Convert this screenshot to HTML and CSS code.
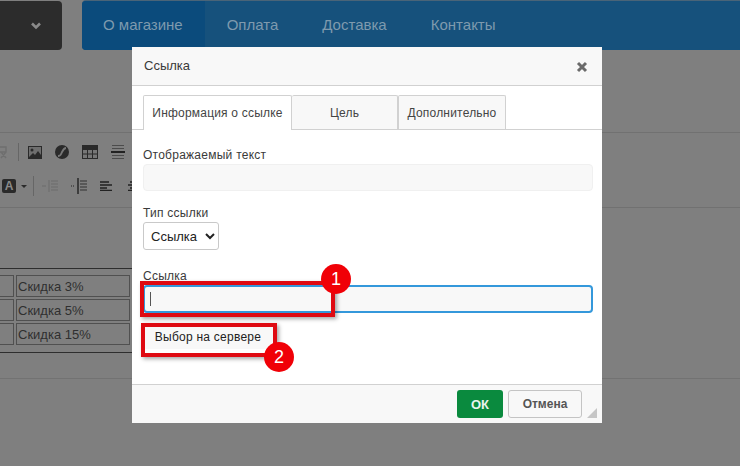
FILE: index.html
```html
<!DOCTYPE html>
<html lang="ru">
<head>
<meta charset="utf-8">
<title>Ссылка</title>
<link rel="stylesheet" href="styles.css">
</head>
<body>
<div class="page">
  <header class="topbar">
    <div class="catalog">
      <svg class="chev" width="12" height="8" viewBox="0 0 12 8"><path d="M2 1.5l4 4 4-4" fill="none" stroke="#8a8a8a" stroke-width="2.6"/></svg>
    </div>
    <nav class="nav">
      <a class="nav-item active">О магазине</a>
      <a class="nav-item">Оплата</a>
      <a class="nav-item">Доставка</a>
      <a class="nav-item">Контакты</a>
    </nav>
  </header>

  <section class="toolbar">
    <div class="tool-row row-one">
      <svg class="faded" width="10" height="14" viewBox="4 0 10 14"><path d="M1 2h9v5H1zM5 7l5 6M10 7l-5 6" fill="none" stroke="#6a6a6a" stroke-width="1.4"/></svg>
      <span class="sep"></span>
      <svg class="tool" width="14" height="13" viewBox="0 0 14 13"><path d="M0 0h14v13H0z" fill="#2a2a2a"/><path d="M1 1h12v11H1z" fill="#6f6f6f"/><path d="M1 11l4-4 2 2 3-4 3 4v3H1z" fill="#2a2a2a"/><circle cx="4" cy="4" r="1.5" fill="#2a2a2a"/></svg>
      <svg class="tool" width="14" height="14" viewBox="0 0 14 14"><circle cx="7" cy="7" r="7" fill="#2a2a2a"/><path d="M3 11c3 0 3-2 4-4s2-4 4-4" fill="none" stroke="#777" stroke-width="1.8"/></svg>
      <svg class="tool" width="16" height="14" viewBox="0 0 16 14"><path d="M0 0h16v14H0z" fill="#2a2a2a"/><path d="M1 5h4v3.500H1zM6 5h4v3.500H6zM11 5h4v3.500h-4zM1 9.500h4V13H1zM6 9.500h4V13H6zM11 9.500h4V13h-4z" fill="#777"/></svg>
      <svg width="14" height="15" viewBox="0 0 14 15"><path d="M1 .5h12M1 3.500h12M1 10.500h12M1 13.500h12" stroke="#4c4c4c"/><path d="M0 7h14" stroke="#222" stroke-width="2"/></svg>
    </div>
    <div class="tool-row row-two">
      <span class="letter">A</span>
      <span class="caret"></span>
      <span class="sep tall"></span>
      <svg class="faded" width="16" height="12" viewBox="0 0 16 12"><path d="M7 0v12M9 1h7M9 4h7M9 7h7M9 10h7M0 6h4" stroke="#666" fill="none"/></svg>
      <svg width="16" height="16" viewBox="0 0 16 16"><path d="M7 0v16" stroke="#222" stroke-width="1.400"/><path d="M9 3h7M9 6h7M9 9h7M9 12h7" stroke="#333" fill="none"/><path d="M0 8h4" stroke="#222" stroke-dasharray="1 1"/></svg>
      <svg width="12" height="10" viewBox="0 0 12 10"><path d="M0 1h9M0 4h12M0 7h7M0 9.500h12" stroke="#222" stroke-width="1.600"/></svg>
      <svg width="12" height="10" viewBox="0 0 12 10"><path d="M2 1h8M0 4h12M2 7h8M0 9.500h12" stroke="#222" stroke-width="1.600"/></svg>
    </div>
  </section>

  <section class="content">
    <div class="table-wrap">
      <table class="discounts">
        <tr><td class="hidden-col"></td><td>Скидка 3%</td></tr>
        <tr><td class="hidden-col"></td><td>Скидка 5%</td></tr>
        <tr><td class="hidden-col"></td><td>Скидка 15%</td></tr>
      </table>
    </div>
  </section>

  <div class="dialog">
    <div class="dialog-head">
      <span class="dialog-title">Ссылка</span>
      <svg class="close" width="12" height="12" viewBox="0 0 12 12"><path d="M2 2l8 8M10 2l-8 8" stroke="#6b6b6b" stroke-width="3"/></svg>
    </div>
    <div class="tabs">
      <span class="tab current">Информация о ссылке</span>
      <span class="tab mid">Цель</span>
      <span class="tab last">Дополнительно</span>
    </div>
    <div class="dialog-body">
      <label class="label">Отображаемый текст</label>
      <div class="field"></div>
      <label class="label second">Тип ссылки</label>
      <select class="type"><option>Ссылка</option></select>
      <label class="label third">Ссылка</label>
      <div class="field focus"><span class="cursor"></span></div>
      <button class="browse">Выбор на сервере</button>
    </div>
    <div class="dialog-foot">
      <button class="ok">ОК</button>
      <button class="cancel">Отмена</button>
      <span class="resize"></span>
    </div>
  </div>

  <div class="mark mark-one"></div>
  <div class="badge badge-one">1</div>
  <div class="mark mark-two"></div>
  <div class="badge badge-two">2</div>
</div>
</body>
</html>
```

FILE: styles.css
```css
* { box-sizing: border-box; }
html, body { margin: 0; padding: 0; }
body { font-family: "Liberation Sans", Arial, sans-serif; background: #7f7f7f; }
.page { position: relative; width: 740px; height: 466px; overflow: hidden; background: #7f7f7f; }

.topbar { display: flex; gap: 20px; padding-top: 1px; height: 50px; }
.catalog { width: 62px; background: #2c2c2c; border-radius: 0 4px 4px 0; display: flex; align-items: center; justify-content: flex-end; padding-right: 20px; }
.nav { flex: 1; display: flex; background: #16517c; border-radius: 4px 0 0 4px; box-shadow: 0 -1px 0 #4a6478; }
.nav-item { padding: 0 22px; line-height: 48px; font-size: 15px; color: #7e9aae; }
.nav-item.active { background: #0b4b7c; padding: 0 22px 0 21px; border-radius: 4px 0 0 4px; }

.toolbar { margin-top: 82px; height: 76px; border-top: 1px solid #717171; border-bottom: 1px solid #717171; position: relative; }
.tool-row { display: flex; align-items: center; }
.row-one { height: 38px; }
.row-two { height: 30px; padding-left: 2px; }
.faded { opacity: .75; }
.sep { width: 1px; height: 18px; background: #666; margin: 0 9px 0 8px; }
.sep.tall { height: 20px; margin: 0 8px 0 6px; }
.tool { margin-right: 13px; }
.tool:first-of-type { margin-right: 14px; }
.letter { width: 14px; height: 14px; background: #2a2a2a; border-radius: 2px; color: #8a8a8a; font-size: 12px; font-weight: 700; line-height: 14px; text-align: center; }
.caret { margin-left: 5px; border-left: 3px solid transparent; border-right: 3px solid transparent; border-top: 3px solid #2a2a2a; }
.row-two svg { margin-right: 13px; }
.row-two svg:nth-of-type(3) { margin-right: 16px; }

.content { margin-top: 60px; height: 111px; border-bottom: 1px solid #727272; }
.table-wrap { width: 132px; height: 85px; border-top: 1px solid #2e2e2e; border-bottom: 1px solid #2e2e2e; display: flex; justify-content: flex-end; overflow: hidden; }
.discounts { flex: none; border-collapse: separate; border-spacing: 2px; margin-top: 4px; align-self: flex-start; }
.discounts td { border: 1px solid #505050; width: 114px; height: 22px; padding: 2px 1px 0; font-size: 13px; color: #2f2f2f; line-height: 18px; }
.discounts .hidden-col { width: 60px; }

.dialog { position: absolute; left: 132px; top: 47px; width: 470px; height: 376px; background: #fff; display: flex; flex-direction: column; color: #333; }
.dialog-head { height: 39px; flex: none; background: #f8f8f8; border-bottom: 1px solid #d1d1d1; display: flex; align-items: center; justify-content: space-between; padding: 0 14px 0 12px; }
.dialog-title { font-size: 13px; color: #3a3a3a; margin-bottom: 2px; }
.close { margin-top: 1px; }
.tabs { flex: none; height: 44px; padding: 9px 0 0 11px; display: flex; border-bottom: 1px solid #d1d1d1; align-items: stretch; }
.tab { border: 1px solid #d1d1d1; border-bottom: 0; background: #f8f8f8; font-size: 12px; color: #444; letter-spacing: .2px; display: flex; align-items: center; justify-content: center; border-radius: 2px 2px 0 0; }
.tab.current { width: 149px; background: #fff; height: 35px; position: relative; }
.tab.mid { width: 106px; border-left: 0; }
.tab.last { width: 108px; }

.dialog-body { flex: 1; padding: 18px 9px 0 11px; display: flex; flex-direction: column; align-items: flex-start; }
.label { font-size: 12px; line-height: 14px; color: #3a3a3a; letter-spacing: .25px; height: 14px; }
.label.second { margin-top: 15px; }
.label.third { margin-top: 19px; }
.field { width: 450px; height: 27px; margin-top: 2px; background: #f8f8f8; border: 1px solid #f0f0f0; border-radius: 4px; flex: none; }
.field.focus { height: 28px; margin-top: 2px; border: 2px solid #3498db; padding: 5px 0 0 5px; }
.cursor { display: block; width: 1px; height: 14px; background: #555; }
.type { width: 76px; height: 28px; margin-top: 2px; background: #fff; border: 1px solid #c9c9c9; border-radius: 3px; font-family: inherit; font-size: 13px; color: #222; padding-left: 3px; flex: none; }
.browse { margin-top: 11px; width: 130px; height: 25px; border: 0; background: #f8f8f8; font-family: inherit; font-size: 12px; letter-spacing: .25px; color: #222; padding: 0; }

.dialog-foot { height: 39px; flex: none; background: #f8f8f8; border-top: 1px solid #d1d1d1; display: flex; justify-content: flex-end; gap: 5px; padding: 5px 20px 0 0; position: relative; }
.ok { width: 46px; height: 28px; border: 0; border-radius: 3px; background: #0a8a3e; color: #eaf3ee; font-family: inherit; font-weight: 700; font-size: 13px; padding: 0; }
.cancel { width: 74px; height: 28px; border: 1px solid #c4c4c4; border-radius: 3px; background: #f8f8f8; color: #555; font-family: inherit; font-weight: 700; font-size: 12px; padding: 0; }
.resize { position: absolute; right: 5px; bottom: 5px; width: 0; height: 0; border-style: solid; border-width: 0 0 10px 10px; border-color: transparent transparent #c6c6c6 transparent; }

.mark { position: absolute; border: 4px solid #df0a12; box-shadow: 2px 2px 4px rgba(0,0,0,.35); }
.mark-one { left: 140px; top: 281px; width: 195px; height: 36px; }
.mark-two { left: 141px; top: 323px; width: 136px; height: 34px; }
.badge { position: absolute; width: 30px; height: 30px; border-radius: 50%; background: #f00007; color: #fff; font-size: 18px; line-height: 30px; text-align: center; }
.badge-one { left: 321px; top: 264px; }
.badge-two { left: 264px; top: 342px; }
```
